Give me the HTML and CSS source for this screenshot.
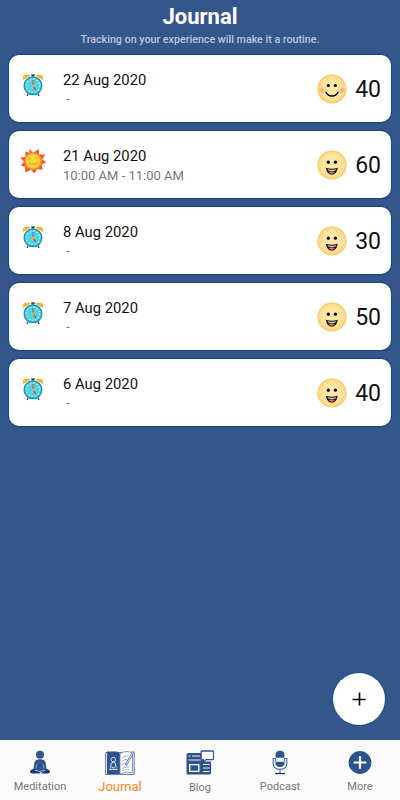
FILE: index.html
```html
<!DOCTYPE html>
<html lang="en">
<head>
  <meta charset="UTF-8">
  <meta name="viewport" content="width=device-width, initial-scale=1.0">
  <title>Journal</title>
  <link rel="stylesheet" href="styles.css">
</head>
<body>
  <!-- Shared icons -->
  <svg class="icon-defs" width="0" height="0">
    <defs>
      <radialGradient id="skin">
        <stop offset="0.55" stop-color="#fee6a6"/>
        <stop offset="0.85" stop-color="#fbdc8c"/>
        <stop offset="1" stop-color="#f5c65a"/>
      </radialGradient>
      <radialGradient id="blush">
        <stop offset="0.3" stop-color="#f9ab83"/>
        <stop offset="1" stop-color="#f9bd8c" stop-opacity="0.2"/>
      </radialGradient>
    </defs>
    <symbol id="clock" viewBox="0 0 22 24">
      <path d="M1.2 7Q.2 3.4 2.6 2Q6 .6 8.8 2.4zM20.8 7Q21.8 3.4 19.4 2Q16 .6 13.2 2.4z" fill="#fbae32"/>
      <path d="M6 20.5l-1 2.4M16 20.5l1 2.4" stroke="#4a5260" stroke-width="1.4"/>
      <path d="M9.3 1.3h3.4v1.8H9.3z" fill="#27384c"/>
      <path d="M10.2 2.5h1.6v2h-1.6z" fill="#53616f"/>
      <circle cx="11" cy="12.8" r="8.8" fill="#4fd3e5" stroke="#228fb3" stroke-width="1.5"/>
      <circle cx="11" cy="12.8" r="6.6" fill="none" stroke="#c5f6fc" stroke-width="1.2" stroke-dasharray="1.3 2.156"/>
      <path d="M11 12.8V7" stroke="#c0444c" stroke-width="1"/>
      <path d="M11 12.8l2.7 4" stroke="#d0454b" stroke-width="1.4"/>
      <circle cx="11" cy="13" r="1.5" fill="#f7a63d"/>
    </symbol>
    <symbol id="sun" viewBox="0 0 26 26">
      <path d="M9.5 0.8L13 5L18.8 1L19 6.5L25.3 6.5L22.3 11L26 14.6L21.4 16.7L22.6 22L17.2 21L14.4 25.5L11.2 21.7L5.2 24.5L5.3 18.8L0.8 17.6L4 13.8L0.3 9.7L5.7 8.7L5 3.5L9.2 5z" fill="#f3562a"/>
      <circle cx="13.1" cy="13.1" r="8.8" fill="#fc9726"/>
      <circle cx="13.1" cy="13.1" r="7.2" fill="#fed43d"/>
      <path d="M8.7 11.2q1-1.2 2 0M15 10.3q1-1.2 2 0M9 14.7q4.7 3.8 8.6-1" fill="none" stroke="#b98428" stroke-width="0.8"/>
    </symbol>
    <symbol id="smile" viewBox="0 0 30 30">
      <circle cx="15" cy="15" r="14.6" fill="url(#skin)"/>
      <circle cx="5" cy="16.3" r="3.7" fill="url(#blush)"/>
      <circle cx="25" cy="16.3" r="3.7" fill="url(#blush)"/>
      <circle cx="11.3" cy="11.5" r="1.6"/>
      <circle cx="18.4" cy="11.5" r="1.6"/>
      <path d="M9 18.2q1.8 3.8 6 3.8t6-3.8" fill="none" stroke="#000" stroke-width="1.5" stroke-linecap="round"/>
    </symbol>
    <symbol id="laugh" viewBox="0 0 30 30">
      <circle cx="15" cy="15" r="14.6" fill="url(#skin)"/>
      <circle cx="11.3" cy="12.2" r="1.6"/>
      <circle cx="18.4" cy="12.2" r="1.6"/>
      <path d="M8.8 17.8q6 2 12 0q-1.3 7-6 7t-6-7z" fill="#111"/>
      <path d="M10.6 19.2q4.2 1 8.4 0l-.6 1.2q-3.6.8-7.2 0z" fill="#fff"/>
      <path d="M11.8 22.2q3-1.8 6 0q-1 1.5-3 1.5t-3-1.5z" fill="#ef6658"/>
    </symbol>
  </svg>

  <div class="app">
    <header class="header">
      <h1>Journal</h1>
      <p>Tracking on your experience will make it a routine.</p>
    </header>

    <!-- Journal entries -->
    <main class="entries">
      <div class="entry">
        <svg class="entry-icon"><use href="#clock"/></svg>
        <div class="entry-text">
          <div class="entry-date">22 Aug 2020</div>
          <div class="entry-time empty">-</div>
        </div>
        <svg class="mood"><use href="#smile"/></svg>
        <div class="score">40</div>
      </div>
      <div class="entry">
        <svg class="entry-icon sun"><use href="#sun"/></svg>
        <div class="entry-text">
          <div class="entry-date">21 Aug 2020</div>
          <div class="entry-time">10:00 AM - 11:00 AM</div>
        </div>
        <svg class="mood"><use href="#laugh"/></svg>
        <div class="score">60</div>
      </div>
      <div class="entry">
        <svg class="entry-icon"><use href="#clock"/></svg>
        <div class="entry-text">
          <div class="entry-date">8 Aug 2020</div>
          <div class="entry-time empty">-</div>
        </div>
        <svg class="mood"><use href="#laugh"/></svg>
        <div class="score">30</div>
      </div>
      <div class="entry">
        <svg class="entry-icon"><use href="#clock"/></svg>
        <div class="entry-text">
          <div class="entry-date">7 Aug 2020</div>
          <div class="entry-time empty">-</div>
        </div>
        <svg class="mood"><use href="#laugh"/></svg>
        <div class="score">50</div>
      </div>
      <div class="entry">
        <svg class="entry-icon"><use href="#clock"/></svg>
        <div class="entry-text">
          <div class="entry-date">6 Aug 2020</div>
          <div class="entry-time empty">-</div>
        </div>
        <svg class="mood"><use href="#laugh"/></svg>
        <div class="score">40</div>
      </div>
    </main>

    <button class="add-button" aria-label="Add entry">
      <svg width="14" height="14" viewBox="0 0 14 14"><path d="M7.5 .5v13M.5 7.5h13" stroke="#000" stroke-width="1.6"/></svg>
    </button>

    <!-- Bottom navigation -->
    <nav class="tabs">
      <a class="tab">
        <svg width="22" height="24" viewBox="0 0 22 24" fill="#2f538b">
          <circle cx="11" cy="4.8" r="4"/>
          <path d="M11 9.3q-4.8 0-5.5 3.2L4.2 20h13.6l-1.3-7.5Q15.8 9.3 11 9.3z"/>
          <path d="M4.3 19Q1 19.7 1 21.6T3 23.5h7l2-1.1-4.5-1.2zM17.7 19Q21 19.7 21 21.6T19 23.5h-7.5l3.2-2.3z" fill="#1c3680"/>
          <path d="M7 20h8l-1 2H8z"/>
          <path d="M7.6 14.5l-.6 4M14.4 14.5l.6 4M7 20.4l3.5 1.2 4-1.2" stroke="#dce3ef" stroke-width=".6" fill="none"/>
        </svg>
        <span>Meditation</span>
      </a>
      <a class="tab active">
        <svg width="30" height="26" viewBox="0 0 30 26">
          <path d="M.6 2.5h28.6v22H.6z" fill="#e8edf5" stroke="#667fae"/>
          <path d="M2 1.5h9.5Q14 1.5 15 4v20H2z" fill="#2f538b"/>
          <path d="M15 4q2-2.5 7-2.5l5.5 1v20q-7-1.5-12.5 1.5z" fill="#fff" stroke="#6980ad" stroke-width=".8"/>
          <path d="M17 8q3-2.7 6-2M17 11.5q3-2.5 5-2M17 15q2-2.2 4.5-2M17 18.5q3-2 7-1.5M17 21q3-2 7-1.5" stroke="#9aaac9" stroke-width=".9" fill="none"/>
          <path d="M28.5 1.5l-7.8 14" stroke="#4b689b" stroke-width="2.2"/>
          <path d="M28.2 2l-7 12.7" stroke="#fff" stroke-width=".9"/>
          <circle cx="8.3" cy="9.6" r="2.3" fill="none" stroke="#e6ecf7" stroke-width=".9"/>
          <path d="M5.4 17.5l.9-4.3q2-1.7 4 0l.9 4.3M4 19.3h8.7M6.4 16.9l1.9 1 1.9-1" fill="none" stroke="#e6ecf7"/>
        </svg>
        <span>Journal</span>
      </a>
      <a class="tab blog">
        <svg width="28" height="26" viewBox="0 0 28 26">
          <path d="M.5 4.5q0-1.5 1.5-1.5h14v5.5l1.5 3H25v11.8q0 1.2-1.2 1.2H1.7Q.5 24.5.5 23.3z" fill="#2f538b"/>
          <path d="M2.5 6h2M6 6h8M2.5 10h12.5M17 14.5h6.5M17 18h6.5M17 21.5h6.5" stroke="#e9eef7" stroke-width="1.2"/>
          <path d="M3.7 14.7h9.1v6.6H3.7z" fill="#2f538b" stroke="#fff" stroke-width="1.3"/>
          <path d="M16 1h10.6q.9 0 .9.9v6.8q0 .9-.9.9H20l-2.7 2.6V9.6H16q-.9 0-.9-.9V1.9q0-.9.9-.9z" fill="#fff" stroke="#2f538b" stroke-width="1.3"/>
        </svg>
        <span>Blog</span>
      </a>
      <a class="tab">
        <svg width="16" height="25" viewBox="0 0 16 25">
          <path d="M3.6 7.8V5Q3.6 .8 8 .8t4.4 4.2v2.8z" fill="#2f538b"/>
          <path d="M3.6 11.8h8.8v1.7q0 3.6-4.4 3.6t-4.4-3.6z" fill="#2f538b"/>
          <path d="M3.6 11.8V8.5H1.2v5Q1.2 19.4 8 19.4t6.8-5.9v-5h-2.4v3.3M8 19.4v4" fill="none" stroke="#4a649c" stroke-width="1.1"/>
          <path d="M3 23.6h10" stroke="#172f80" stroke-width="1.2"/>
        </svg>
        <span>Podcast</span>
      </a>
      <a class="tab">
        <svg width="24" height="24" viewBox="0 0 24 24">
          <circle cx="12" cy="12.5" r="11.4" fill="#2f538b"/>
          <path d="M12 7v11M6.5 12.5h11" stroke="#fff" stroke-width="2.2" stroke-linecap="round"/>
        </svg>
        <span>More</span>
      </a>
    </nav>
  </div>
</body>
</html>
```
FILE: styles.css
```css
* {
  box-sizing: border-box;
}

body {
  margin: 0;
  font-family: Roboto, sans-serif;
  background-color: #34568b;
  color: #111;
}

.icon-defs {
  position: absolute;
}

.app {
  display: flex;
  flex-direction: column;
  height: 800px;
  position: relative;
}

.header {
  height: 55px;
  text-align: center;
}

.header h1 {
  margin: 0;
  padding-top: 4px;
  font-size: 22px;
  line-height: 26px;
  font-weight: bold;
  color: #fff;
}

.header p {
  margin: 3px 0 0;
  font-size: 10.7px;
  line-height: 14px;
  font-weight: 500;
  color: #b9c7de;
}

/* Entries */
.entries {
  flex: 1;
  display: flex;
  flex-direction: column;
  gap: 9px;
  padding: 0 9px;
}

.entry {
  display: flex;
  height: 67px;
  padding: 0 10px 0 13px;
  background: #fff;
  border-radius: 10px;
  box-shadow: 0 0 1px 1px #174582;
}

.entry-icon {
  width: 22px;
  height: 24px;
  margin: 18px 19px 0 0;
}

.entry-icon.sun {
  width: 26px;
  height: 26px;
  margin: 17px 17px 0 -2px;
}

.entry-text {
  flex: 1;
  padding-top: 15px;
}

.entry-date {
  font-size: 14.8px;
  line-height: 20px;
}

.entry-time {
  padding-top: 1px;
  font-size: 13px;
  line-height: 18px;
  color: #777;
}

.entry-time.empty {
  padding: 0 0 0 3px;
}

.mood {
  width: 30px;
  height: 30px;
  margin: 19px 8px 0 0;
}

.score {
  padding-top: 1px;
  font-size: 23px;
  line-height: 67px;
}

.add-button {
  position: absolute;
  right: 15px;
  bottom: 75px;
  width: 52px;
  height: 52px;
  display: flex;
  align-items: center;
  justify-content: center;
  padding: 0;
  border: none;
  border-radius: 50%;
  background: #fff;
  box-shadow: 0 0 1px 1px #174f92;
}

/* Bottom navigation */
.tabs {
  display: flex;
  height: 60px;
  background: #fafafa;
}

.tab {
  flex: 1;
  display: flex;
  flex-direction: column;
  align-items: center;
  padding-top: 10px;
  font-size: 11px;
  color: #757575;
}

.tab svg {
  flex-shrink: 0;
}

.tab span {
  margin-top: auto;
  line-height: 14px;
  padding-bottom: 6px;
}

.tab.active {
  font-size: 13px;
  color: #f58a22;
}

.tab.blog span {
  padding-bottom: 5px;
}
```
